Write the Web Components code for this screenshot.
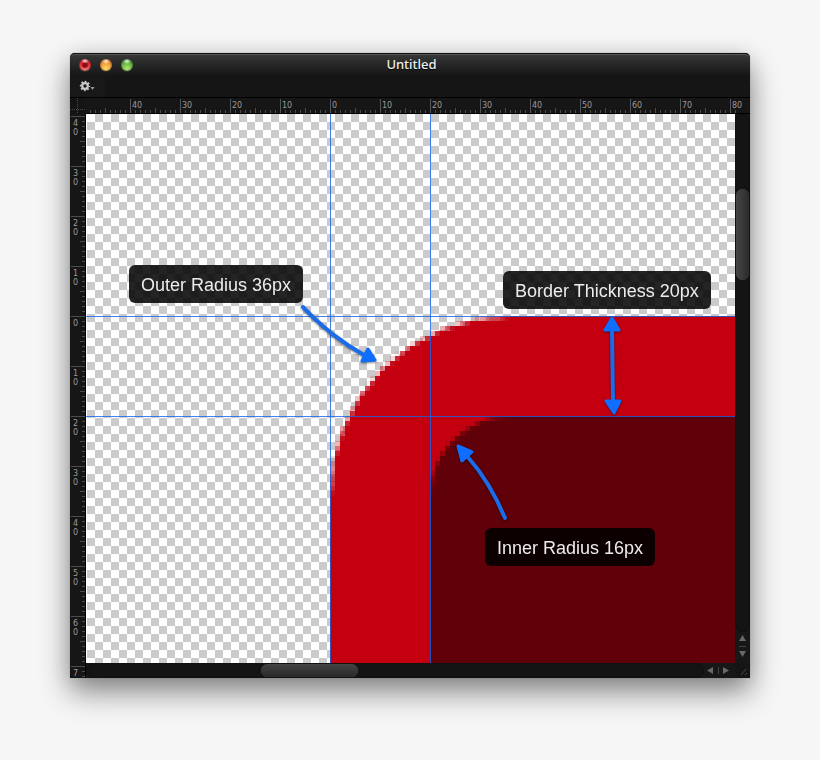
<!DOCTYPE html>
<html lang="en">
<head>
<meta charset="utf-8">
<title>Untitled</title>
<style>
  body{
    display: flex;
    box-sizing: border-box;
    min-height: 100vh;
    margin: 0;
    padding: 53px 70px 82px;
    background: #f6f6f6;
    font-family: 'Noto Sans', 'DejaVu Sans', sans-serif;
  }

  editor-window{
    flex: 1;
  }
</style>
</head>
<body>

<editor-window>
  <span slot="title">Untitled</span>
  <ruler-bar slot="top" from="-40" to="400"></ruler-bar>
  <ruler-bar slot="left" from="-40" to="400" vertical></ruler-bar>

  <art-board>
    <pixel-corner thickness="20" radius="36"></pixel-corner>
    <guide-line at="0"></guide-line>
    <guide-line at="20"></guide-line>
    <guide-line at="0" vertical></guide-line>
    <guide-line at="20" vertical></guide-line>
    <arrow-mark line="M217 193Q243 221 278 241" heads="289,246 282,235 276,247"></arrow-mark>
    <arrow-mark line="M526 215L527 288" heads="526,204 519,216 533,216|528,299 520,287 534,287"></arrow-mark>
    <arrow-mark line="M419 404Q404 368 381 342" heads="372,332 386,338 376,347"></arrow-mark>
    <call-out style="left: 43px; top: 151px">Outer Radius 36px</call-out>
    <call-out style="left: 417px; top: 157px">Border Thickness 20px</call-out>
    <call-out style="left: 399px; top: 414px">Inner Radius 16px</call-out>
  </art-board>

  <scroll-bar slot="right" vertical style="--before: 75; --after: 351; --thumb: 91px"></scroll-bar>
  <scroll-bar slot="bottom" style="--before: 175; --after: 346; --thumb: 97px"></scroll-bar>
</editor-window>

<script>
const SCALE = 5;

class EditorWindow extends HTMLElement{
  static get template(){
    return `
      <style>
        :host{
          display: grid;
          grid-template: 45px 16px 1fr 15px / 16px 1fr 15px;
          min-width: 0;
          background: #151515;
          border-radius: 5px 5px 0 0;
          box-shadow: 0 0 1px #666, 0 14px 30px rgba(0, 0, 0, .45), 0 2px 20px rgba(0, 0, 0, .1);
        }

        header{
          grid-column: 1 / -1;
          box-sizing: border-box;
          background: linear-gradient(#383838, #151515 22px);
          border-top: 1px solid #111;
          border-bottom: 1px solid #000;
          border-radius: 5px 5px 0 0;
          box-shadow: inset 0 1px #555;
        }

        .title{
          display: grid;
          grid-template-columns: 1fr auto 1fr;
          align-items: center;
          height: 21px;
          padding: 0 8px 0 9px;
        }

        h1{
          margin: 0;
          padding: 0 0 2px 2px;
          font-size: 13px;
          font-weight: 500;
          line-height: 18px;
          color: #f0f0ec;
          text-shadow: 0 1px 1px #000;
        }

        .lights{
          display: flex;
          gap: 9px;
        }

        .lights button{
          width: 12px;
          height: 12px;
          padding: 0;
          border: 0;
          border-radius: 50%;
          box-shadow: inset 0 0 2px rgba(0, 0, 0, .6), 0 1px #333;
          background:
            radial-gradient(ellipse 4px 3px at 50% 18%, rgba(255, 255, 255, .9), transparent),
            radial-gradient(circle at 50% 85%, var(--lit), var(--base) 65%);
        }

        .close{
          --lit: #ff8a80;
          --base: #dd2832;
        }

        .lights .close{
          background:
            radial-gradient(ellipse 4px 3px at 50% 14%, rgba(255, 255, 255, .9), transparent),
            radial-gradient(circle at 50% 50%, #8c0a14 2px, transparent 4px),
            radial-gradient(circle at 50% 85%, var(--lit), var(--base) 65%);
        }

        .min{
          --lit: #ffe36b;
          --base: #ec8a2c;
        }

        .max{
          --lit: #b9ee78;
          --base: #52a636;
        }

        .tools{
          display: flex;
          width: 35px;
          height: 22px;
          background: #181818;
        }

        .tools button{
          display: flex;
          align-items: center;
          padding: 0 0 0 9px;
          border: 0;
          background: none;
          color: #c9c9c9;
        }

        .corner{
          background:
            linear-gradient(90deg, #4a4a4a 1px, transparent 1px) 0 11px / 2px 1px repeat-x,
            linear-gradient(#4a4a4a 1px, transparent 1px) 7px 0 / 1px 2px repeat-y,
            #141414;
        }

        .left{
          grid-area: 3 / 1 / 5 / 2;
        }

        .left, .right, .bottom, .top, main{
          display: grid;
          min-width: 0;
          min-height: 0;
        }

        .top{
          grid-column: 2 / -1;
        }

        .grip{
          display: block;
        }
      </style>

      <header>
        <div class='title'>
          <div class='lights'>
            <button class='close' aria-label='Close'></button>
            <button class='min' aria-label='Minimize'></button>
            <button class='max' aria-label='Zoom'></button>
          </div>
          <h1><slot name='title'></slot></h1>
        </div>
        <div class='tools'>
          <button aria-label='Actions'>
            <svg width='16' height='12' viewBox='0 0 16 12'>
              <g stroke='currentColor' fill='none'>
                <circle cx='6' cy='6' r='2.8' stroke-width='2.2'/>
                <circle cx='6' cy='6' r='4.4' stroke-width='1.6' stroke-dasharray='1.73 1.725' stroke-dashoffset='.86'/>
              </g>
              <path d='M11.500 7h4l-2 3z' fill='#999'/>
            </svg>
          </button>
        </div>
      </header>
      <div class='corner'></div>
      <div class='top'><slot name='top'></slot></div>
      <div class='left'><slot name='left'></slot></div>
      <main><slot></slot></main>
      <div class='right'><slot name='right'></slot></div>
      <div class='bottom'><slot name='bottom'></slot></div>
      <svg class='grip' width='15' height='15'>
        <path d='M6 12l5-6M10 12l2-2' stroke='#484848' fill='none'/>
      </svg>
    `;
  }

  constructor(){
    super();
    this.attachShadow({ mode: 'open' }).innerHTML = EditorWindow.template;
  }
}

// Major tick every 10 document pixels, half tick every 5, minor tick on each.
class RulerBar extends HTMLElement{
  static get template(){
    return `
      <style>
        :host{
          display: flex;
          overflow: hidden;
          box-sizing: border-box;
          min-width: 0;
          height: 16px;
          padding: 0 14px 0 44px;
          border-bottom: 1px solid #000;
          font-family: 'DejaVu Sans', sans-serif;
          font-size: 8px;
          line-height: 9px;
          color: #9b9b98;
          background:
            linear-gradient(#161616, #161616) right / 14px 100% no-repeat,
            linear-gradient(90deg, #555 1px, transparent 1px) 44px 1px / 50px 14px repeat-x,
            linear-gradient(90deg, #4c4c4c 1px, transparent 1px) 19px 10px / 25px 5px repeat-x,
            linear-gradient(90deg, #4c4c4c 1px, transparent 1px) 4px 12px / 5px 3px repeat-x,
            #161616;
        }

        span{
          flex: none;
          box-sizing: border-box;
          width: 50px;
          padding: 3px 0 0 2px;
        }

        :host([vertical]){
          flex-direction: column;
          width: 16px;
          height: 0;
          min-height: 100%;
          padding: 2px 0 0;
          border: 0;
          border-right: 1px solid #000;
          background:
            linear-gradient(#4c4c4c 1px, transparent 1px) 1px 2px / 14px 50px repeat-y,
            linear-gradient(#4c4c4c 1px, transparent 1px) 10px 2px / 5px 25px repeat-y,
            linear-gradient(#4c4c4c 1px, transparent 1px) 12px 2px / 3px 5px repeat-y,
            #161616;
        }

        :host([vertical]) span{
          width: 9px;
          height: 50px;
          padding: 3px 0 0 3px;
        }

        :host([vertical]) b{
          display: block;
        }

        b{
          font-weight: 400;
        }
      </style>
    `;
  }

  constructor(){
    super();
    this.attachShadow({ mode: 'open' }).innerHTML = RulerBar.template;
  }

  connectedCallback(){
    const to = +this.getAttribute('to');
    for(let n = +this.getAttribute('from'); n <= to; n += 10){
      const label = document.createElement('span');
      String(Math.abs(n)).split('').forEach(digit => {
        const b = document.createElement('b');
        b.textContent = digit;
        label.appendChild(b);
      });
      this.shadowRoot.appendChild(label);
    }
  }
}

class ArtBoard extends HTMLElement{
  static get template(){
    return `
      <style>
        :host{
          --ox: 244px;
          --oy: 202px;
          display: block;
          position: relative;
          overflow: hidden;
          background:
            linear-gradient(#fff, #fff) 0 0 / 1px 100% no-repeat,
            repeating-conic-gradient(#cbcbcb 0 25%, #fff 0 50%) 1px 0 / 16px 16px;
        }
      </style>
      <slot></slot>
    `;
  }

  constructor(){
    super();
    this.attachShadow({ mode: 'open' }).innerHTML = ArtBoard.template;
  }
}

class PixelCorner extends HTMLElement{
  static get template(){
    return `
      <style>
        :host{
          position: absolute;
          left: var(--ox);
          top: var(--oy);
        }

        canvas{
          display: block;
          width: 2000px;
          height: 2000px;
          image-rendering: pixelated;
        }
      </style>
      <canvas width='400' height='400'></canvas>
    `;
  }

  constructor(){
    super();
    this.attachShadow({ mode: 'open' }).innerHTML = PixelCorner.template;
  }

  connectedCallback(){
    const t = +this.getAttribute('thickness');
    const r = +this.getAttribute('radius');
    const ctx = this.shadowRoot.querySelector('canvas').getContext('2d');
    this.fill(ctx, '#c40010', 0, r);
    this.fill(ctx, '#600009', t, r - t);
  }

  fill(ctx, color, inset, radius){
    ctx.fillStyle = color;
    ctx.beginPath();
    ctx.roundRect(inset, inset, 600, 600, radius);
    ctx.fill();
  }
}

class GuideLine extends HTMLElement{
  static get template(){
    return `
      <style>
        :host{
          position: absolute;
          left: 0;
          right: 0;
          top: calc(var(--oy) + var(--at));
          height: 1px;
          background: rgba(20, 100, 235, .8);
        }

        :host([vertical]){
          left: calc(var(--ox) + var(--at));
          right: auto;
          top: 0;
          bottom: 0;
          width: 1px;
          height: auto;
        }
      </style>
    `;
  }

  constructor(){
    super();
    this.attachShadow({ mode: 'open' }).innerHTML = GuideLine.template;
  }

  connectedCallback(){
    this.style.setProperty('--at', this.getAttribute('at') * SCALE + 'px');
  }
}

class ArrowMark extends HTMLElement{
  static get template(){
    return `
      <style>
        :host{
          position: absolute;
          inset: 0;
        }

        svg{
          display: block;
          width: 100%;
          height: 100%;
          filter: drop-shadow(0 1px 1px rgba(0, 0, 0, .5));
        }

        path{
          fill: none;
          stroke: #1a6cea;
          stroke-width: 4;
          stroke-linecap: round;
        }

        polygon{
          fill: #0f6dff;
          stroke: #0f6dff;
          stroke-width: 3;
          stroke-linejoin: round;
        }
      </style>
    `;
  }

  constructor(){
    super();
    this.attachShadow({ mode: 'open' }).innerHTML = ArrowMark.template;
  }

  connectedCallback(){
    const heads = this.getAttribute('heads').split('|');
    this.shadowRoot.innerHTML += `
      <svg aria-hidden='true'>
        <path d='${this.getAttribute('line')}'/>
        ${heads.map(points => `<polygon points='${points}'/>`).join('')}
      </svg>
    `;
  }
}

class CallOut extends HTMLElement{
  static get template(){
    return `
      <style>
        :host{
          position: absolute;
          padding: 2px 12px 0;
          border-radius: 6px;
          background: rgba(0, 0, 0, .86);
          color: #ececec;
          font: 18px/36px 'Liberation Sans', Arial, sans-serif;
          white-space: nowrap;
        }
      </style>
      <slot></slot>
    `;
  }

  constructor(){
    super();
    this.attachShadow({ mode: 'open' }).innerHTML = CallOut.template;
  }
}

class ScrollBar extends HTMLElement{
  static get template(){
    return `
      <style>
        :host{
          display: flex;
          min-width: 0;
          min-height: 0;
          background: #171717;
        }

        .track{
          display: flex;
          flex: 1;
          padding: 1px 0;
          border-radius: 8px;
          background: #141414;
          box-shadow: inset 0 0 2px #0c0c0c;
        }

        .track::before, .track::after{
          content: '';
          flex: var(--before) 1 0;
        }

        .track::after{
          flex-grow: var(--after);
        }

        .thumb{
          flex: 0 0 var(--thumb);
          border-radius: 7px;
          background: linear-gradient(#444, #282828);
          box-shadow: inset 0 0 1px #505050;
        }

        .arrows{
          display: flex;
          align-items: center;
          justify-content: space-between;
          width: 22px;
          padding: 0 6px 0 3px;
        }

        button{
          width: 6px;
          height: 7px;
          padding: 0;
          border: 0;
          background: #686868;
          clip-path: polygon(100% 0, 100% 100%, 0 50%);
        }

        button:last-child{
          clip-path: polygon(0 0, 0 100%, 100% 50%);
        }

        i{
          width: 1px;
          height: 7px;
          background: #444;
        }

        :host([vertical]), :host([vertical]) .track, :host([vertical]) .arrows{
          flex-direction: column;
        }

        :host([vertical]) .track{
          padding: 0 1px;
        }

        :host([vertical]) .thumb{
          background: linear-gradient(90deg, #454545, #2b2b2b);
        }

        :host([vertical]) .arrows{
          width: auto;
          height: 22px;
          padding: 3px 0 6px;
        }

        :host([vertical]) button{
          width: 7px;
          height: 6px;
          clip-path: polygon(0 100%, 100% 100%, 50% 0);
        }

        :host([vertical]) button:last-child{
          clip-path: polygon(0 0, 100% 0, 50% 100%);
        }

        :host([vertical]) i{
          width: 7px;
          height: 1px;
        }
      </style>
      <div class='track'><div class='thumb'></div></div>
      <div class='arrows'>
        <button aria-label='Scroll back'></button>
        <i></i>
        <button aria-label='Scroll forward'></button>
      </div>
    `;
  }

  constructor(){
    super();
    this.attachShadow({ mode: 'open' }).innerHTML = ScrollBar.template;
  }
}

window.customElements.define('editor-window', EditorWindow);
window.customElements.define('ruler-bar', RulerBar);
window.customElements.define('art-board', ArtBoard);
window.customElements.define('pixel-corner', PixelCorner);
window.customElements.define('guide-line', GuideLine);
window.customElements.define('arrow-mark', ArrowMark);
window.customElements.define('call-out', CallOut);
window.customElements.define('scroll-bar', ScrollBar);
</script>
</body>
</html>
